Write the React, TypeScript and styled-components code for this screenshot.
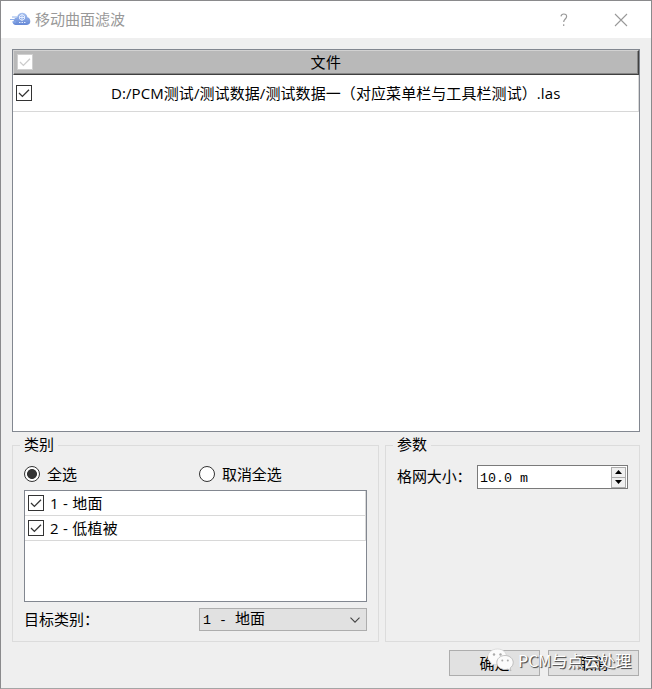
import React from 'react';
import styled, { createGlobalStyle } from 'styled-components';

const Global = createGlobalStyle`
  * { box-sizing: border-box; }
  html, body { margin: 0; padding: 0; background: #efefef; }
  body { font-family: "Noto Sans CJK SC", sans-serif; font-size: 15px; color: #000; }
`;

const Dialog = styled.div`
  position: relative;
  width: 652px;
  height: 689px;
  border: 1px solid #8a8a8c;
  border-bottom-color: #a5a5a5;
  background: #efefef;
  display: flex;
  flex-direction: column;
  overflow: hidden;
  white-space: nowrap;
`;

const TitleBar = styled.header`
  height: 37px;
  flex: none;
  background: #fff;
  display: flex;
  align-items: center;
  padding: 0 23px 0 9px;
  color: #999;
`;

const Title = styled.h1`
  flex: 1;
  margin: 0 0 2px 4px;
  font-size: 15px;
  font-weight: 400;
  line-height: 20px;
`;

const WindowButton = styled.button<{ $gap?: number }>`
  display: flex;
  padding: 0;
  border: 0;
  background: none;
  color: #999;
  margin-right: ${p => p.$gap ?? 0}px;
`;

const Content = styled.main`
  flex: 1;
  padding: 11px 11px 12px;
  display: flex;
  flex-direction: column;
`;

const FileTable = styled.section`
  height: 383px;
  flex: none;
  border: 1px solid #828790;
  background: #fff;
`;

const FileHeader = styled.div`
  height: 25px;
  display: grid;
  grid-template-columns: 23px 1fr 26px;
  align-items: center;
  padding: 0 0 1px 3px;
  background: #b9b9b9;
  border-top: 1px solid #d2d2d2;
  border-left: 1px solid #d2d2d2;
  border-right: 1px solid #404040;
  border-bottom: 1px solid #404040;
  box-shadow: inset -1px -1px #858585;
  text-align: center;
  line-height: 20px;
  letter-spacing: 0.4px;
`;

const FileRow = styled.div`
  height: 37px;
  display: grid;
  grid-template-columns: 20px 1fr;
  align-items: center;
  padding-left: 3px;
  border-bottom: 1px solid #d8d8d8;
  border-right: 1px solid #d8d8d8;
`;

const FilePath = styled.span`
  font-family: "Open Sans", "Noto Sans CJK SC", sans-serif;
  font-size: 15px;
  line-height: 20px;
  padding-left: 75px;
  letter-spacing: 0.08px;
`;

const Panels = styled.div`
  display: grid;
  grid-template-columns: 367px 255px;
  gap: 6px;
  margin-top: 3px;
  height: 207px;
`;

const Group = styled.fieldset`
  margin: 0;
  padding: 0 11px;
  min-width: 0;
  height: 207px;
  border: 1px solid #dcdcdc;
`;

const Legend = styled.legend`
  padding: 0 4px;
  margin-left: -4px;
  height: 20px;
  line-height: 18px;
`;

const RadioRow = styled.div`
  display: grid;
  grid-template-columns: 175px 1fr;
  height: 35px;
  align-items: center;
  padding-top: 3px;
`;

const RadioLabel = styled.label`
  display: flex;
  align-items: center;
  gap: 7px;
  line-height: 20px;
  letter-spacing: -0.1px;
`;

const RadioMark = styled.span<{ $on?: boolean }>`
  width: 16px;
  height: 16px;
  border: 1px solid #333;
  border-radius: 50%;
  background: ${p => (p.$on ? 'radial-gradient(circle, #333 0 4.6px, #fff 5.3px)' : '#fff')};
`;

const ClassList = styled.div`
  height: 112px;
  border: 1px solid #828790;
  background: #fff;
`;

const ClassRow = styled.label`
  height: 25px;
  display: flex;
  align-items: center;
  gap: 6px;
  padding-left: 3px;
  border-bottom: 1px solid #d8d8d8;
  border-right: 1px solid #d8d8d8;
  font-family: "Open Sans", "Noto Sans CJK SC", sans-serif;
  font-size: 15px;
  line-height: 20px;
  letter-spacing: 0.25px;
`;

const Target = styled.div`
  display: grid;
  grid-template-columns: 175px 168px;
  align-items: center;
  margin-top: 6px;
  height: 23px;
  line-height: 20px;
`;

const TargetLabel = styled.span`
  padding-bottom: 2px;
`;

const Mono = styled.span`
  font-family: "Liberation Mono", "Noto Sans CJK SC", monospace;
  font-size: 13.33px;
  padding-top: 2px;
`;

const Cjk = styled.span`
  font-size: 15px;
`;

const Combo = styled.div`
  height: 23px;
  border: 1px solid #adadad;
  background: #e1e1e1;
  display: flex;
  align-items: center;
  justify-content: space-between;
  padding: 0 6px 0 3px;
  line-height: 20px;
`;

const ParamRow = styled.div`
  display: flex;
  align-items: center;
  height: 44px;
`;

const ParamLabel = styled.span`
  width: 81px;
  line-height: 20px;
  padding-bottom: 2px;
  letter-spacing: -0.1px;
`;

const SpinBox = styled.div`
  width: 151px;
  height: 24px;
  flex: none;
  display: flex;
  align-items: center;
  justify-content: space-between;
  padding: 0 1px 0 2px;
  border: 1px solid #7a7a7a;
  background: #fff;
`;

const SpinButtons = styled.div`
  width: 15px;
  height: 21px;
  display: grid;
  grid-template-rows: 11px 10px;
`;

const SpinButton = styled.span`
  border: 1px solid #acacac;
  background: #f0f0f0;
  display: grid;
  place-items: center;
  & + & { border-top: 0; }
`;

const Actions = styled.footer`
  display: flex;
  justify-content: flex-end;
  gap: 8px;
  margin-top: 8px;
  padding-right: 1px;
`;

const ActionButton = styled.button`
  width: 91px;
  height: 26px;
  padding: 0;
  border: 1px solid #adadad;
  background: #e1e1e1;
  color: #000;
  font: 15px/20px "Noto Sans CJK SC", sans-serif;
`;

const Watermark = styled.div`
  position: absolute;
  left: 486px;
  top: 645px;
  display: flex;
  align-items: center;
  gap: 4px;
  height: 28px;
  color: #fff;
  font-size: 16px;
  line-height: 24px;
  text-shadow: 1px 1px 1px #555, 1px 1px 0 #777;
`;

const Check = ({ muted }: { muted?: boolean }) => (
  <svg width="16" height="16" viewBox="0 0 16 16" fill="none">
    <rect x=".5" y=".5" width="15" height="15" fill="#fff" stroke={muted ? '#d0d0d0' : '#333'} />
    <path d="m3 8 3.4 3.4L13 4.7" stroke={muted ? '#ccc' : '#333'} strokeWidth="1.3" />
  </svg>
);

const CloudLogo = () => (
  <svg width="21" height="15" viewBox="0 0 21 15">
    <defs>
      <linearGradient id="cloud" x1="0" y1="0" x2="0" y2="1">
        <stop stopColor="#a9c2ef" />
        <stop offset="1" stopColor="#6588d6" />
      </linearGradient>
    </defs>
    <path d="M7 13C3 13 2 11 3.800 8.500 4 6.500 5.500 5.500 7 5.500c.6-3 2.800-5 5.800-4.800 2.600.2 4.300 2 4.600 4.500C19.500 5.500 20.300 7.500 20.300 9.500c0 2.300-1.500 3.500-4 3.500Z" fill="url(#cloud)" />
    <path d="M0 7.500h4M2 5h5M2 10h4" stroke="#8fb0ea" />
    <path d="m12 2.500 2.500 1.500v3l-2.500 1.500-2.500-1.500V4Zm-2 3h4M12 3v5M9 10.500h1.500m1 0H13m1 0h1.500" stroke="#e4edff" fill="none" />
  </svg>
);

const ChatLogo = () => (
  <svg width="27" height="24" viewBox="0 0 27 24">
    <path d="M10.500 1C5 1 .8 4.500.8 8.800c0 2.400 1.400 4.500 3.500 6L3.500 18l3.500-1.800c1 .3 2.200.4 3.500.4C16 16.600 19.500 13 19.500 8.800S16 1 10.500 1Z" fill="#fbfbfb" stroke="#ccc" strokeWidth=".6" />
    <path d="M18 7.500c-4.500 0-8.200 3-8.200 7s3.700 7 8.200 7c1 0 2-.2 2.900-.4L24 22.800l-.9-2.800c1.900-1.300 3.100-3.200 3.100-5.500 0-4-3.700-7-8.200-7Z" fill="#fbfbfb" stroke="#aaa" strokeWidth=".7" />
    <g fill="#aaa"><circle cx="7" cy="6.500" r="1.200" /><circle cx="13.500" cy="6.500" r="1.200" /><circle cx="15.300" cy="12.500" r="1" /><circle cx="20.800" cy="12.500" r="1" /></g>
  </svg>
);

const classes = ['1 - 地面', '2 - 低植被'];

export default function App() {
  return (
    <>
      <Global />
      <Dialog>
        <TitleBar>
          <CloudLogo />
          <Title>移动曲面滤波</Title>
          <WindowButton $gap={46} aria-label="帮助">
            <svg width="8" height="14" viewBox="0 0 8 14" fill="none" stroke="currentColor" strokeWidth="1.200">
              <path d="M1 3.300C1.300 1.600 2.300 1 3.800 1c1.800 0 2.800.9 2.800 2.400C6.600 6 3.700 6 3.700 9M3.700 11.300V13" />
            </svg>
          </WindowButton>
          <WindowButton aria-label="关闭">
            <svg width="14" height="14" viewBox="0 0 14 14" stroke="currentColor" strokeWidth="1.100"><path d="m1 1 12 12M13 1 1 13" /></svg>
          </WindowButton>
        </TitleBar>
        <Content>
          <FileTable>
            <FileHeader><Check muted /><span>文件</span></FileHeader>
            <FileRow>
              <Check />
              <FilePath>D:/PCM测试/测试数据/测试数据一（对应菜单栏与工具栏测试）.las</FilePath>
            </FileRow>
          </FileTable>
          <Panels>
            <Group>
              <Legend>类别</Legend>
              <RadioRow>
                <RadioLabel><RadioMark $on />全选</RadioLabel>
                <RadioLabel><RadioMark />取消全选</RadioLabel>
              </RadioRow>
              <ClassList>
                {classes.map(name => <ClassRow key={name}><Check />{name}</ClassRow>)}
              </ClassList>
              <Target>
                <TargetLabel>目标类别：</TargetLabel>
                <Combo>
                  <Mono>1 - <Cjk>地面</Cjk></Mono>
                  <svg width="10" height="6" viewBox="0 0 10 6" fill="none" stroke="#444" strokeWidth="1.100"><path d="m.5.6 4.500 4.500L9.500.6" /></svg>
                </Combo>
              </Target>
            </Group>
            <Group>
              <Legend>参数</Legend>
              <ParamRow>
                <ParamLabel>格网大小：</ParamLabel>
                <SpinBox>
                  <Mono>10.0 m</Mono>
                  <SpinButtons>
                    <SpinButton><svg width="7" height="4"><path d="M0 4 3.500 0 7 4Z" /></svg></SpinButton>
                    <SpinButton><svg width="7" height="4"><path d="m0 0 3.500 4L7 0Z" /></svg></SpinButton>
                  </SpinButtons>
                </SpinBox>
              </ParamRow>
            </Group>
          </Panels>
          <Actions>
            <ActionButton>确定</ActionButton>
            <ActionButton>取消</ActionButton>
          </Actions>
        </Content>
        <Watermark><ChatLogo /><span>PCM与点云处理</span></Watermark>
      </Dialog>
    </>
  );
}
